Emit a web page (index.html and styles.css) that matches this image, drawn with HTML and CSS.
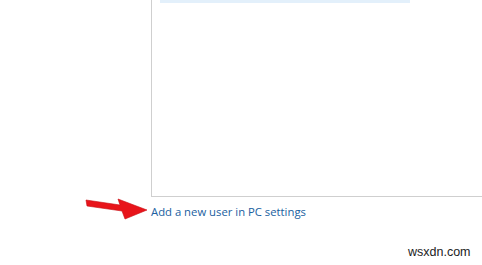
FILE: index.html
```html
<!DOCTYPE html>
<html lang="en">

<head>
    <meta charset="UTF-8">
    <meta name="viewport" content="width=device-width, initial-scale=1.0">
    <title>Manage Accounts</title>
    <link rel="stylesheet" href="styles.css">
</head>

<body>
    <div class="page">
        <div class="user-list">
            <div class="user-item selected"></div>
        </div>

        <div class="add-row">
            <svg class="arrow" width="64" height="22" viewBox="0 0 64 22">
                <path d="M1 2 L35 7 L33 1 L62 12 L40 21 L37 13 L2 8 Z" fill="#e8141a" stroke="#c80c12" stroke-width="0.6" stroke-linejoin="round"/>
            </svg>
            <a class="add-link" href="#">Add a new user in PC settings</a>
        </div>

        <div class="watermark">wsxdn.com</div>
    </div>
</body>

</html>
```

FILE: styles.css
```css
body {
    margin: 0;
    padding: 0;
    background-color: #fff;
    font-family: "Open Sans", Arial, sans-serif;
}

.page {
    position: relative;
    width: 482px;
    height: 265px;
    overflow: hidden;
}

.user-list {
    margin-left: 151px;
    height: 197px;
    border-left: 1px solid #cfcfcf;
    border-bottom: 1px solid #cfcfcf;
    padding-left: 8px;
    box-sizing: border-box;
}

.user-item.selected {
    width: 250px;
    height: 3px;
    background-color: #e3f0fb;
}

.add-row {
    display: flex;
    align-items: flex-start;
    padding-left: 85px;
}

.arrow {
    display: block;
    margin-top: 1px;
}

.add-link {
    margin-top: 7px;
    margin-left: 2px;
    color: #2060a0;
    font-size: 11.3px;
    line-height: 16px;
    text-decoration: none;
}

.watermark {
    position: absolute;
    left: 408px;
    top: 245px;
    font-family: "Liberation Sans", Arial, sans-serif;
    font-size: 12.5px;
    color: #222;
}
```
